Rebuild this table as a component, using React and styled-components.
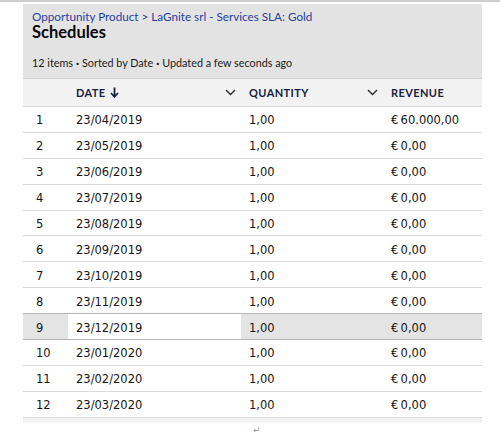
import React from 'react';
import styled, { createGlobalStyle } from 'styled-components';

const GlobalStyle = createGlobalStyle`
  html, body {
    margin: 0;
    padding: 0;
    background: #ffffff;
  }
  body {
    font-family: Lato, "Noto Sans", sans-serif;
    color: #080707;
  }
`;

const TopRule = styled.div`
  height: 2px;
  background: #cfcfcf;
`;

const Panel = styled.div`
  width: 459px;
  margin: 2px 0 0 23px;
`;

const Header = styled.div`
  background: #e4e3e4;
  height: 75px;
  padding: 6px 9px 0;
  box-sizing: border-box;
  border-bottom: 1px solid #d2d0d0;
  display: flex;
  flex-direction: column;
`;

const Crumbs = styled.div`
  font-size: 11.7px;
  line-height: 13px;
  color: #2440a0;
`;

const Title = styled.h1`
  margin: 0;
  font-size: 16.5px;
  line-height: 18px;
  font-weight: 700;
  color: #080707;
`;

const Meta = styled.div`
  margin-top: 15px;
  font-size: 10.8px;
  line-height: 13px;
  color: #1a1a1a;
`;

const Dot = styled.span`
  font-weight: 900;
  margin: 0 3px;
`;

const Grid = styled.div`
  display: grid;
  grid-template-columns: 45px 173px 142px 99px;
`;

const HeadRow = styled(Grid)`
  background: #f3f2f2;
  height: 28px;
  border-bottom: 1px solid #d8d8d8;
  box-sizing: border-box;
`;

const HeadCell = styled.div`
  display: flex;
  align-items: center;
  justify-content: space-between;
  padding: 0 5px 0 8px;
  font-size: 11px;
  font-weight: 700;
  letter-spacing: 0.4px;
  text-transform: uppercase;
  color: #16223e;
`;

const HeadLabel = styled.span`
  display: flex;
  align-items: center;
  gap: 4px;
`;

const Row = styled(Grid)`
  height: 25.9px;
  box-sizing: border-box;
  border-bottom: 1px solid ${p => (p.$active ? '#b4b4b4' : '#dadada')};
  box-shadow: ${p => (p.$active ? '0 -1px 0 #b4b4b4' : 'none')};
  background: ${p => (p.$active ? '#e5e4e4' : '#ffffff')};
  font-family: "DejaVu Sans", Verdana, sans-serif;
  font-size: 11.5px;
  color: #151515;
`;

const Cell = styled.div`
  display: flex;
  align-items: center;
  padding-top: 2px;
  padding-left: ${p => (p.$num ? '13px' : '8px')};
  background: ${p => (p.$focus ? '#ffffff' : 'transparent')};
`;

const Footer = styled.div`
  height: 5px;
  background: #f3f2f2;
`;

const Return = styled.div`
  margin: 2px 0 0 253px;
  font-family: "DejaVu Sans", sans-serif;
  font-size: 9px;
  line-height: 10px;
  color: #9a9a9a;
`;

const Chevron = () => (
  <svg width="11" height="7" viewBox="0 0 11 7">
    <path d="M1 1 L5.5 5.5 L10 1" fill="none" stroke="#2b2b2b" strokeWidth="1.4" />
  </svg>
);

const DownArrow = () => (
  <svg width="9" height="11" viewBox="0 0 9 11">
    <path d="M4.5 0.5 V9" stroke="#16223e" strokeWidth="1.8" />
    <path d="M1 6 L4.5 9.8 L8 6" fill="none" stroke="#16223e" strokeWidth="1.8" />
  </svg>
);

const rows = [
  ['23/04/2019', '60.000,00'],
  ['23/05/2019', '0,00'],
  ['23/06/2019', '0,00'],
  ['23/07/2019', '0,00'],
  ['23/08/2019', '0,00'],
  ['23/09/2019', '0,00'],
  ['23/10/2019', '0,00'],
  ['23/11/2019', '0,00'],
  ['23/12/2019', '0,00'],
  ['23/01/2020', '0,00'],
  ['23/02/2020', '0,00'],
  ['23/03/2020', '0,00'],
];

export default function App() {
  return (
    <>
      <GlobalStyle />
      <TopRule />
      <Panel>
        <Header>
          <Crumbs>Opportunity Product &gt; LaGnite srl - Services SLA: Gold</Crumbs>
          <Title>Schedules</Title>
          <Meta>
            12 items<Dot>·</Dot>Sorted by Date<Dot>·</Dot>Updated a few seconds ago
          </Meta>
        </Header>
        <HeadRow>
          <HeadCell />
          <HeadCell>
            <HeadLabel>Date <DownArrow /></HeadLabel>
            <Chevron />
          </HeadCell>
          <HeadCell>
            <HeadLabel>Quantity</HeadLabel>
            <Chevron />
          </HeadCell>
          <HeadCell>
            <HeadLabel>Revenue</HeadLabel>
          </HeadCell>
        </HeadRow>
        {rows.map(([date, revenue], i) => {
          const active = i === 8;
          return (
            <Row key={date} $active={active}>
              <Cell $num>{i + 1}</Cell>
              <Cell $focus={active}>{date}</Cell>
              <Cell>1,00</Cell>
              <Cell>{'€\u2009' + revenue}</Cell>
            </Row>
          );
        })}
        <Footer />
      </Panel>
      <Return>↵</Return>
    </>
  );
}
